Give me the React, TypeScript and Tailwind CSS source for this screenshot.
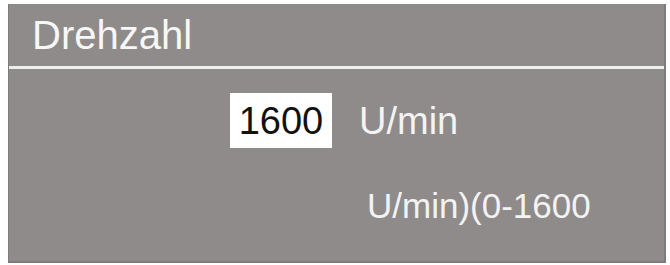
import React from "react";

export default function App() {
  return (
    <div
      className="w-[670px] h-[265px] bg-white pt-[4px] pl-[8px]"
      style={{ fontFamily: '"Liberation Sans", Arial, sans-serif' }}
    >
      <div className="w-[658px] h-[259px] bg-[#8f8b8b] border-l border-r-2 border-b-2 border-[#7f7b7b] flex flex-col">
        <div className="h-[62px] flex items-center pl-[23px] text-[40px] leading-none text-[#f7f7f7]">
          Drehzahl
        </div>
        <div className="h-[3px] bg-[#eeeeee]" />
        <div className="flex-1 flex flex-col">
          <div className="flex items-center mt-[24px] pl-[221px]">
            <div className="w-[102px] h-[55px] bg-white flex items-center justify-center text-[38px] leading-none text-[#111111]">
              1600
            </div>
            <div className="ml-[27px] text-[38px] leading-none text-[#f3f3f3]">U/min</div>
          </div>
          <div className="mt-[40px] pl-[358px] text-[35px] leading-none text-[#f3f3f3]">
            U/min)(0-1600
          </div>
        </div>
      </div>
    </div>
  );
}
